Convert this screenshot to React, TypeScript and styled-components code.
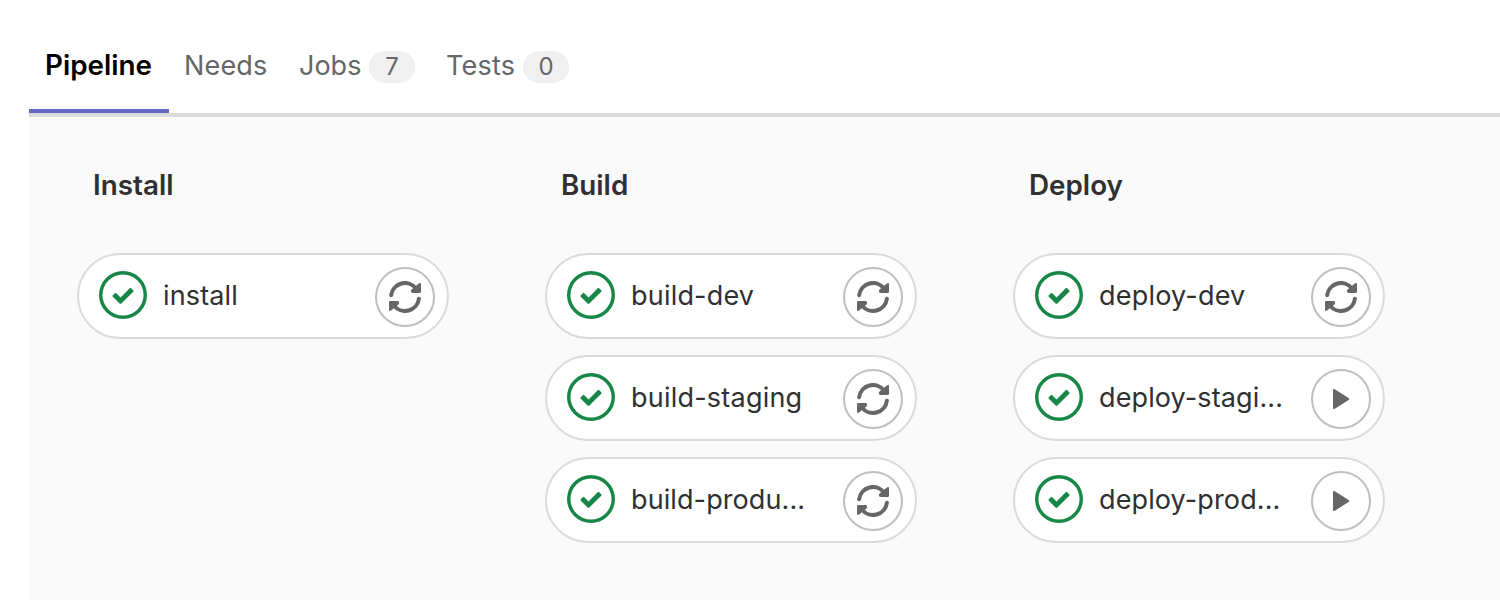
import React from 'react';
import styled, { createGlobalStyle } from 'styled-components';

const GlobalStyle = createGlobalStyle`
  *, *::before, *::after { box-sizing: border-box; }
  body {
    margin: 0;
    background: #fff;
    font-family: Inter, 'Liberation Sans', sans-serif;
    font-size: 27px;
    color: #303030;
    overflow: hidden;
  }
`;

const Page = styled.main`
  height: 600px;
  padding: 18px 0 0 29px;
  display: flex;
  flex-direction: column;
  overflow: hidden;
`;

const Tabs = styled.nav`
  display: flex;
  height: 99px;
  flex: none;
  border-bottom: 4px solid #dbdbdb;
`;

const Tab = styled.a<{ $active?: boolean; $width: number; $tracking: number }>`
  display: flex;
  align-items: center;
  flex: none;
  gap: 8px;
  width: ${(p) => p.$width}px;
  height: 95px;
  padding: ${(p) => (p.$active ? '0 0 2px 16px' : '0 0 0 15px')};
  font-size: ${(p) => (p.$active ? 27.8 : 27)}px;
  line-height: 32px;
  white-space: nowrap;
  letter-spacing: ${(p) => p.$tracking}px;
  color: ${(p) => (p.$active ? '#000' : '#666')};
  font-weight: ${(p) => (p.$active ? 600 : 400)};
  box-shadow: ${(p) => (p.$active ? 'inset 0 -4px 0 #6666c4' : 'none')};
`;

const TabLabel = styled.span<{ $width?: number }>`
  width: ${(p) => (p.$width ? `${p.$width}px` : 'auto')};
`;

const Badge = styled.span`
  width: 46px;
  height: 32px;
  margin-top: 3px;
  border-radius: 16px;
  background: #f0f0f0;
  font-size: 24px;
  line-height: 32px;
  letter-spacing: 0;
  text-align: center;
`;

const Graph = styled.section`
  flex: 1;
  display: flex;
  gap: 96px;
  padding: 48px;
  background: #fafafa;
`;

const Stage = styled.div`
  width: 372px;
  flex: none;
  display: flex;
  flex-direction: column;
  gap: 16px;
`;

const StageTitle = styled.h2`
  margin: 0 0 32px;
  height: 40px;
  padding-left: 16px;
  font-size: 27.8px;
  font-weight: 600;
  line-height: 40px;
`;

const JobPill = styled.div`
  display: flex;
  align-items: center;
  height: 86px;
  padding: 0 12px 0 20px;
  border: 2px solid #dbdbdb;
  border-radius: 43px;
  background: #fff;
`;

const StatusIcon = styled.svg`
  width: 48px;
  height: 48px;
  flex: none;
  margin-bottom: 2px;
  fill: #168746;
`;

const JobName = styled.span<{ $tracking: number }>`
  flex: 1;
  margin: 0 0 0 16px;
  line-height: 40px;
  white-space: nowrap;
  letter-spacing: ${(p) => p.$tracking}px;
`;

const ActionButton = styled.button`
  display: flex;
  align-items: center;
  justify-content: center;
  width: 60px;
  height: 60px;
  flex: none;
  margin: 2px 0 0;
  padding: 0;
  border: 2px solid #bfbfbf;
  border-radius: 50%;
  background: #fff;
  color: #666;
`;

const ActionIcon = styled.svg`
  width: 32px;
  height: 32px;
  flex: none;
`;

const Success = () => (
  <StatusIcon viewBox="0 0 14 14">
    <path fillRule="evenodd" d="M0 7a7 7 0 1 1 14 0A7 7 0 0 1 0 7zm13 0A6 6 0 1 0 1 7a6 6 0 0 0 12 0z" />
    <path d="M6.278 7.697L5.045 6.464a.296.296 0 0 0-.42-.002l-.613.614a.298.298 0 0 0 .002.42l1.91 1.909a.5.5 0 0 0 .703.005l.265-.265L9.997 6.04a.291.291 0 0 0-.009-.408l-.614-.614a.29.29 0 0 0-.408-.009L6.278 7.697z" />
  </StatusIcon>
);

const halfArrow = (
  <>
    <path d="M2.1 14.2A14 14 0 0 1 27.2 7.6" fill="none" stroke="currentColor" strokeWidth="4" strokeLinecap="round" />
    <path d="M29.2 3Q32 1.1 32 3V10.8Q32 12 30.8 12H23.4Q22 12 22 10.6Q21.4 9.6 22.6 8.6L24.4 7Z" fill="currentColor" />
  </>
);

const Retry = () => (
  <ActionIcon viewBox="0 0 32 32">
    {halfArrow}
    <g transform="rotate(180 16 16)">{halfArrow}</g>
  </ActionIcon>
);

const Play = () => (
  <ActionIcon viewBox="0 0 32 32">
    <path d="M8 7C8 6 8.9 5.6 9.8 6.2L23.6 15Q24.9 16 23.6 17L9.8 25.8C8.9 26.4 8 26 8 25Z" fill="currentColor" />
  </ActionIcon>
);

type Job = { name: string; tracking: number; action: 'retry' | 'play' };
type StageData = { title: string; jobs: Job[] };

const stages: StageData[] = [
  { title: 'Install', jobs: [{ name: 'install', tracking: 0.15, action: 'retry' }] },
  {
    title: 'Build',
    jobs: [
      { name: 'build-dev', tracking: 0.2, action: 'retry' },
      { name: 'build-staging', tracking: 0.22, action: 'retry' },
      { name: 'build-produ...', tracking: 0.1, action: 'retry' },
    ],
  },
  {
    title: 'Deploy',
    jobs: [
      { name: 'deploy-dev', tracking: 0.2, action: 'retry' },
      { name: 'deploy-stagi...', tracking: 0.12, action: 'play' },
      { name: 'deploy-prod...', tracking: 0.12, action: 'play' },
    ],
  },
];

export default function App() {
  return (
    <Page>
      <GlobalStyle />
      <Tabs>
        <Tab $active $width={140} $tracking={0}>Pipeline</Tab>
        <Tab $width={115} $tracking={0.15}>Needs</Tab>
        <Tab $width={147} $tracking={0}>
          <TabLabel $width={62}>Jobs</TabLabel>
          <Badge>7</Badge>
        </Tab>
        <Tab $width={154} $tracking={0.2}>
          <TabLabel $width={69}>Tests</TabLabel>
          <Badge>0</Badge>
        </Tab>
      </Tabs>
      <Graph>
        {stages.map((stage) => (
          <Stage key={stage.title}>
            <StageTitle>{stage.title}</StageTitle>
            {stage.jobs.map((job) => (
              <JobPill key={job.name}>
                <Success />
                <JobName $tracking={job.tracking}>{job.name}</JobName>
                <ActionButton aria-label={job.action}>
                  {job.action === 'retry' ? <Retry /> : <Play />}
                </ActionButton>
              </JobPill>
            ))}
          </Stage>
        ))}
      </Graph>
    </Page>
  );
}
